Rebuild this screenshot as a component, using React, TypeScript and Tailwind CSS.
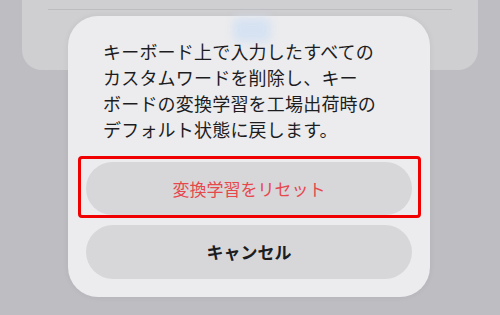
export default function App() {
  return (
    <div
      className="relative w-[500px] h-[315px] overflow-hidden bg-[#bdbdc2]"
      style={{ fontFamily: '"Noto Sans CJK JP", "Noto Sans", sans-serif' }}
    >
      {/* sheet behind the dialog */}
      <div className="mx-[22px] h-[70px] rounded-b-[20px] bg-[#cfcfd2] pt-[9px]">
        <div className="mx-[26px] h-px bg-[#bdbdc0]" />
      </div>

      {/* dialog */}
      <div className="relative -mt-[54px] ml-[68px] w-[362px] rounded-[30px] bg-[#ececee] px-[18px] pt-[22px] pb-[18px] shadow-[0_0_6px_rgba(0,0,0,0.06)]">
        <div className="absolute left-[165px] top-[2px] h-[24px] w-[38px] rounded-md bg-[#d6e2f2] blur-[4px]" />
        <p className="relative pl-[17px] text-[18px] leading-[26px] text-[#1d1d1f] tracking-[0.2px]">
          キーボード上で入力したすべての
          <br />
          カスタムワードを削除し、キー
          <br />
          ボードの変換学習を工場出荷時の
          <br />
          デフォルト状態に戻します。
        </p>

        <div className="relative mt-[20px]">
          <button className="flex h-[53px] w-full items-center justify-center rounded-full bg-[#d7d7da] text-[17px] text-[#e6484c]">
            変換学習をリセット
          </button>
          <div className="pointer-events-none absolute -left-[8px] -right-[9px] -top-[6px] -bottom-[3px] rounded-[4px] border-[3px] border-[#f00000]" />
        </div>

        <button className="mt-[10px] flex h-[54px] w-full items-center justify-center rounded-full bg-[#d7d7da] text-[17px] font-bold text-[#1d1d1f]">
          キャンセル
        </button>
      </div>
    </div>
  );
}
